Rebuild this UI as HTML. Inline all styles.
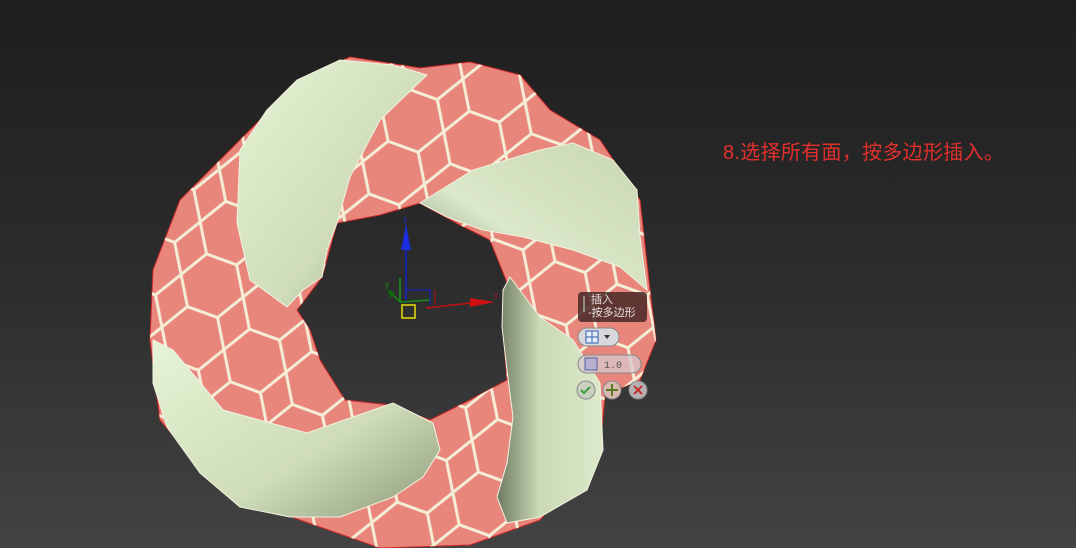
<!DOCTYPE html>
<html><head><meta charset="utf-8"><style>
html,body{margin:0;padding:0}
body{width:1076px;height:548px;overflow:hidden;background:linear-gradient(#1e1e1e,#2c2c2c 50%,#434343);position:relative;font-family:"Liberation Sans","Noto Sans CJK SC",sans-serif}
.cap{position:absolute;left:723px;top:136px;font-size:20px;color:#e2302c;white-space:nowrap;letter-spacing:0.3px}
</style></head><body>
<svg width="1076" height="548" style="position:absolute;left:0;top:0">
<defs>
<pattern id="hex" width="66" height="56" patternUnits="userSpaceOnUse" patternTransform="rotate(20)">
<path d="M0 28 L17 0 L49 0 L66 28 L49 56 L17 56 Z M17 0 L0 -28 M49 0 L66 -28" fill="none" stroke="#f4eed6" stroke-width="3"/>
</pattern>
<linearGradient id="g1" x1="0" y1="0" x2="1" y2="1"><stop offset="0" stop-color="#e6f4d6"/><stop offset="0.6" stop-color="#cfdcb9"/><stop offset="1" stop-color="#8d9a7c"/></linearGradient>
<linearGradient id="g2" x1="1" y1="0" x2="0" y2="1"><stop offset="0" stop-color="#c9d6b3"/><stop offset="0.6" stop-color="#dbe8c9"/><stop offset="1" stop-color="#7f8b6f"/></linearGradient>
<linearGradient id="g3" x1="0" y1="0" x2="1" y2="0"><stop offset="0" stop-color="#6f7a62"/><stop offset="0.4" stop-color="#cbd9b5"/><stop offset="1" stop-color="#dce9cb"/></linearGradient>
</defs>
<path fill-rule="evenodd" fill="#e9867c" stroke="#d02a2a" stroke-width="1" d="M153 270 L180 200 L240 140 L300 80 L350 57 L420 68 L470 62 L520 75 L550 110 L600 140 L640 200 L650 290 L656 340 L640 380 L605 395 L600 450 L540 520 L470 545 L380 548 L300 520 L220 490 L160 420 L150 340 Z M297 310 L322 277 L337 223 L380 215 L420 203 L460 225 L490 240 L510 290 L503 330 L507 380 L470 400 L430 420 L390 405 L345 400 L320 360 L310 330 Z"/>
<path fill-rule="evenodd" fill="url(#hex)" d="M153 270 L180 200 L240 140 L300 80 L350 57 L420 68 L470 62 L520 75 L550 110 L600 140 L640 200 L650 290 L656 340 L640 380 L605 395 L600 450 L540 520 L470 545 L380 548 L300 520 L220 490 L160 420 L150 340 Z M297 310 L322 277 L337 223 L380 215 L420 203 L460 225 L490 240 L510 290 L503 330 L507 380 L470 400 L430 420 L390 405 L345 400 L320 360 L310 330 Z"/>
<polygon fill="url(#g1)" stroke="#f2f2e0" stroke-width="1" points="267,110 297,80 340,60 393,65 427,75 380,120 350,177 337,223 327,250 322,277 303,290 287,307 250,280 237,223 240,150"/>
<polygon fill="url(#g2)" stroke="#f2f2e0" stroke-width="1" points="420,203 473,170 540,150 573,143 613,160 637,190 640,237 647,290 620,267 573,250 523,237 483,230 447,217"/>
<polygon fill="url(#g3)" stroke="#f2f2e0" stroke-width="1" points="503,290 510,277 540,317 573,340 600,383 603,450 587,490 540,517 507,523 497,497 507,463 513,417 507,370 502,327"/>
<polygon fill="url(#g1)" stroke="#f2f2e0" stroke-width="1" points="153,340 173,350 223,410 307,433 373,410 393,403 433,423 440,450 423,477 393,497 340,517 290,517 240,507 200,473 167,427 153,383"/>
<line x1="406" y1="225" x2="406" y2="300" stroke="#1020d0" stroke-width="1.5"/>
<polygon points="406,225 401,250 411,250" fill="#1a2ee0"/>
<polyline points="406,290 430,290 430,305" fill="none" stroke="#1020d0"/>
<line x1="400" y1="278" x2="400" y2="302" stroke="#1a9a1a" stroke-width="1.5"/>
<line x1="400" y1="302" x2="430" y2="300" stroke="#1a8a1a" stroke-width="1.5"/>
<line x1="400" y1="302" x2="390" y2="292" stroke="#1a8a1a" stroke-width="1.5"/>
<polygon points="387,289 395,293 391,298" fill="#0d6a0d"/>
<line x1="426" y1="308" x2="480" y2="302" stroke="#c01010" stroke-width="1.5"/>
<polygon points="470,298 495,302 470,307" fill="#d01010"/>
<polyline points="435,290 435,305" stroke="#b01010" fill="none"/>
<text x="385" y="287" font-size="8" fill="#1a9a1a" font-family="Liberation Sans">y</text>
<text x="494" y="298" font-size="8" fill="#c01010" font-family="Liberation Sans">x</text>
<text x="403" y="222" font-size="8" fill="#1a2ee0" font-family="Liberation Sans">z</text>
<rect x="402" y="305" width="13" height="13" fill="none" stroke="#e8e000" stroke-width="1.5"/>
<rect x="578" y="292" width="69" height="30" rx="4" fill="rgba(70,40,38,0.85)"/>
<line x1="584" y1="296" x2="584" y2="312" stroke="#aaa" stroke-width="1.5"/>
<text x="591" y="303" font-size="11" fill="#e8e0e0" font-family="Liberation Sans,Noto Sans CJK SC,sans-serif">插入</text>
<text x="588" y="316" font-size="11" fill="#e8e0e0" font-family="Liberation Sans,Noto Sans CJK SC,sans-serif">-按多边形</text>
<rect x="578" y="328" width="41" height="18" rx="9" fill="#d8d8dc" stroke="#888"/>
<rect x="586" y="331" width="12" height="12" fill="#e8eef8" stroke="#3060b0"/>
<line x1="592" y1="331" x2="592" y2="343" stroke="#3060b0"/><line x1="586" y1="337" x2="598" y2="337" stroke="#3060b0"/>
<polygon points="604,335 610,335 607,339" fill="#333"/>
<rect x="578" y="355" width="63" height="18" rx="9" fill="rgba(215,200,205,0.75)" stroke="#888"/>
<rect x="585" y="358" width="12" height="12" fill="#b8b0d0" stroke="#5060a0"/>
<text x="604" y="368" font-size="10" fill="#555" font-family="Liberation Mono">1.0</text>
<circle cx="586" cy="390" r="9" fill="#c8d0c0" stroke="#888"/>
<path d="M581 390 l3 3 l6 -6" stroke="#3a9a3a" stroke-width="2" fill="none"/>
<circle cx="612" cy="390" r="9" fill="#d8b8b0" stroke="#888"/>
<path d="M612 384 v12 M606 390 h12" stroke="#5a7a20" stroke-width="2"/>
<circle cx="638" cy="390" r="9" fill="#b8b0b0" stroke="#888"/>
<path d="M634 386 l8 8 M642 386 l-8 8" stroke="#c03030" stroke-width="2"/>
</svg>
<div class="cap">8.选择所有面，按多边形插入。</div>
</body></html>
